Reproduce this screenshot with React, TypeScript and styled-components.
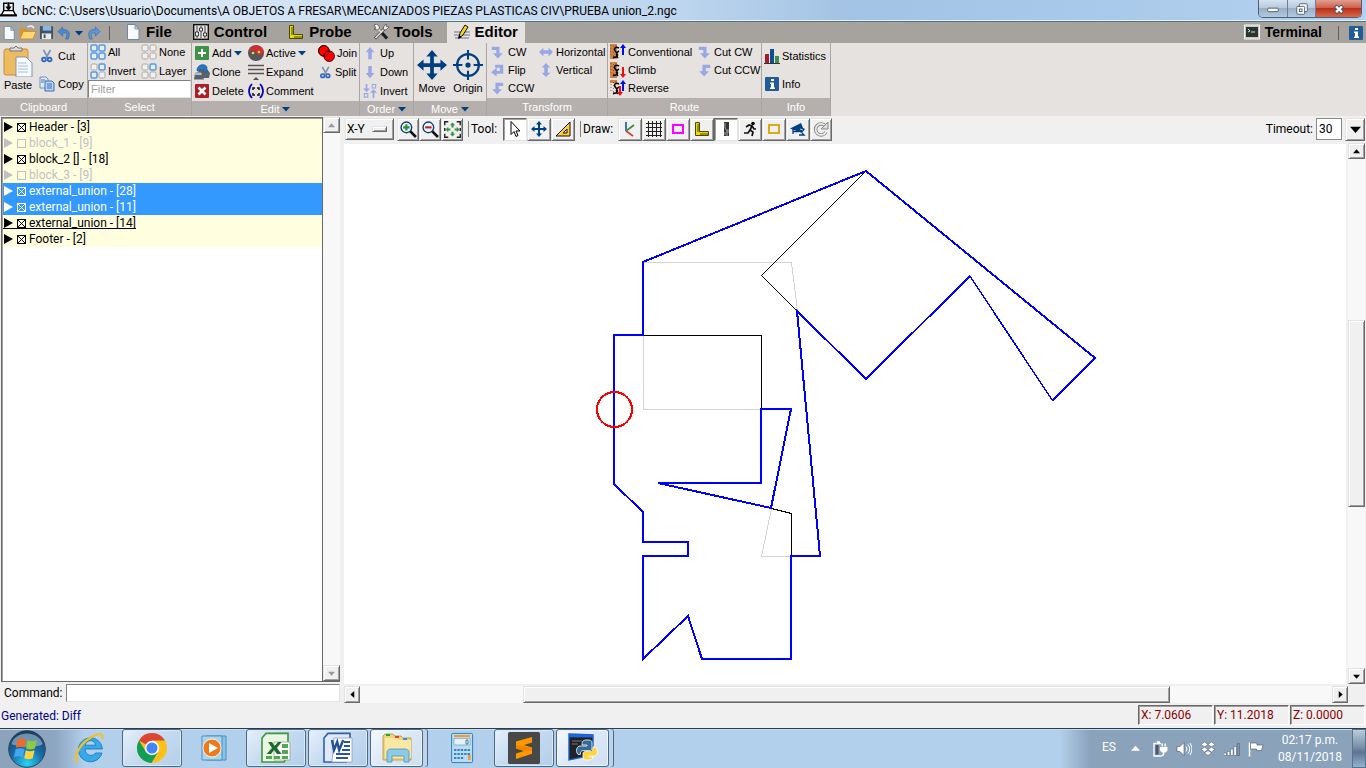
import { ReactNode, useState } from 'react';
import styled, { createGlobalStyle, css } from 'styled-components';

const theme = {
  ui: "Roboto, 'Open Sans', 'Noto Sans', sans-serif",
  ribbon: "'Liberation Sans', Arial, sans-serif",
  face: '#f0f0f0',
  ribbonBg: '#e6e2df',
  tabBg: '#a6a29e',
  labelBg: '#b5b0ad',
  navy: '#004080',
  pale: '#99a7e4',
};

const GlobalStyle = createGlobalStyle`
  * { box-sizing: border-box; }
  body { margin: 0; overflow: hidden; }
  button, input { font: inherit; color: inherit; margin: 0; }
  button { padding: 0; border: 0; background: none; cursor: default; }
  svg { display: block; flex: none; }
`;

const raised = css`
  background: ${theme.face};
  border: 1px solid;
  border-color: #e3e3e3 #696969 #696969 #e3e3e3;
  box-shadow: inset 1px 1px #fff, inset -1px -1px #a0a0a0;
`;

const sunken = css`
  background: #fff;
  border: 1px solid;
  border-color: #808080 #e3e3e3 #e3e3e3 #808080;
`;

const Window = styled.div`
  display: flex;
  flex-direction: column;
  height: 100vh;
  background: ${theme.face};
  font-family: ${theme.ui};
  font-size: 12px;
  line-height: 16px;
  color: #000;
`;

/* ---------- title bar ---------- */

const TitleBar = styled.header`
  display: flex;
  align-items: flex-start;
  height: 22px;
  padding-right: 4px;
  background: linear-gradient(90deg, #e2edf8 0, #cfe1f4 25%, #bdd5ee 50%, #a3c3e4 62%, #a9c9ea 80%, #b4d2f0 100%);
  border-bottom: 1px solid #56717f;
  box-shadow: inset 0 -1px #e4f2fb;
`;

const Title = styled.h1`
  flex: 1;
  margin: 0;
  padding: 3px 0 0 5px;
  font-size: 12px;
  font-weight: 400;
  line-height: 16px;
  white-space: nowrap;
`;

const CaptionButtons = styled.div`
  display: flex;
  border: 1px solid #4b5f75;
  border-top: 0;
  border-radius: 0 0 5px 5px;
  overflow: hidden;
`;

const CaptionButton = styled.button<{ $close?: boolean }>`
  display: flex;
  align-items: center;
  justify-content: center;
  width: ${(p) => (p.$close ? '46px' : '28px')};
  height: 17px;
  border-left: ${(p) => (p.$close ? '1px solid #4b2020' : '0')};
  background: ${(p) => (p.$close
    ? 'linear-gradient(#e0a090 0, #d0604a 45%, #b8301c 50%, #d8684a 100%)'
    : 'linear-gradient(#d5e2f0 0, #b9cade 45%, #9aafc6 50%, #b4c9e0 100%)')};
  & + & { border-left: 1px solid #6c8096; }
`;

/* ---------- tab row ---------- */

const TabRow = styled.nav`
  display: flex;
  align-items: stretch;
  height: 21px;
  padding: 0 2px;
  background: ${theme.tabBg};
  font-family: ${theme.ribbon};
`;

const QuickBar = styled.div`
  display: flex;
  align-items: center;
  gap: 3px;
  width: 116px;
`;

const Tabs = styled.div`
  display: flex;
  flex: 1;
  gap: 7px;
`;

const Tab = styled.button<{ $active?: boolean; $small?: boolean }>`
  display: flex;
  align-items: center;
  gap: 5px;
  padding: 0 7px 1px;
  font-size: ${(p) => (p.$small ? '14px' : '15px')};
  font-weight: 700;
  background: ${(p) => (p.$active ? theme.ribbonBg : 'transparent')};
`;

const Divider = styled.span<{ $space?: number }>`
  width: 1px;
  height: 14px;
  margin: 0 ${(p) => p.$space || 5}px;
  background: #5f5c5a;
  align-self: center;
`;

/* ---------- ribbon ---------- */

const Ribbon = styled.section`
  display: flex;
  height: 73px;
  background: ${theme.ribbonBg};
  font-family: ${theme.ribbon};
  font-size: 11px;
  line-height: 14px;
`;

const Group = styled.div<{ $width: number }>`
  display: flex;
  flex-direction: column;
  flex: 0 0 ${(p) => p.$width}px;
  border-right: 1px solid #a9a5a2;
`;

const GroupBody = styled.div`
  display: flex;
  flex: 1;
  min-height: 0;
`;

const GroupLabel = styled.div<{ $menu?: boolean }>`
  display: flex;
  align-items: center;
  justify-content: center;
  gap: 3px;
  height: ${(p) => (p.$menu ? '15px' : '18px')};
  background: ${theme.labelBg};
  color: #fff;
`;

const Column = styled.div<{ $width: number; $packed?: boolean }>`
  display: flex;
  flex-direction: column;
  justify-content: ${(p) => (p.$packed ? 'flex-start' : 'space-evenly')};
  width: ${(p) => p.$width}px;
`;

const Tool = styled.button<{ $slot?: number }>`
  display: flex;
  align-items: center;
  gap: 2px;
  height: 18px;
  padding-left: 2px;
  white-space: nowrap;
  & > svg:first-child { margin: 0 ${(p) => (p.$slot || 0)}px; }
`;

const BigTool = styled.button`
  display: flex;
  flex-direction: column;
  align-items: center;
  justify-content: flex-end;
  gap: 1px;
  width: 36px;
  padding-bottom: 6px;
`;

const ClipBody = styled(GroupBody)`
  & ${Column} { justify-content: space-between; padding: 4px 0 5px; }
`;

const SelectBody = styled(GroupBody)`
  flex-direction: column;
`;

const SelectGrid = styled.div`
  display: grid;
  grid-template-columns: 51px 51px;
  height: 37px;
`;

const FilterInput = styled.input`
  ${sunken}
  width: 100%;
  height: 18px;
  padding: 0 2px;
  &::placeholder { color: #a0a0a0; opacity: 1; }
`;

/* ---------- workspace ---------- */

const Workspace = styled.main`
  display: flex;
  flex: 1;
  min-height: 0;
  gap: 4px;
`;

const Sidebar = styled.aside`
  display: flex;
  flex-direction: column;
  flex: 0 0 340px;
  padding: 1px 0 0 1px;
`;

const TreeFrame = styled.div`
  display: flex;
  flex: 1;
  min-height: 0;
  border-bottom: 1px solid #696969;
`;

const Tree = styled.ul`
  flex: 1;
  margin: 0;
  padding: 1px 0 0 1px;
  list-style: none;
  background: #fff;
  border: 1px solid #696969;
  border-bottom: 0;
  box-shadow: inset 1px 1px #a0a0a0;
`;

const TreeRow = styled.li<{ $selected: boolean; $enabled: boolean }>`
  height: 16px;
  background: ${(p) => (p.$selected ? '#3399ff' : '#ffffe0')};
  color: ${(p) => (p.$selected ? '#fff' : p.$enabled ? '#000' : '#c0c0c0')};
`;

const TreeEntry = styled.div<{ $active: boolean }>`
  display: inline-flex;
  align-items: center;
  height: 16px;
  vertical-align: top;
  box-shadow: ${(p) => (p.$active ? 'inset 0 -2px #ffffe0, inset 0 -3px #000' : 'none')};
`;

const EntryLabel = styled.label`
  display: flex;
  align-items: center;
  gap: 3px;
  padding-left: 3px;
  white-space: nowrap;
`;

const BlockCheck = styled.input`
  appearance: none;
  width: 9px;
  height: 9px;
  border: 1px solid currentColor;
  &:checked {
    background:
      linear-gradient(45deg, transparent 43%, currentColor 43%, currentColor 57%, transparent 57%),
      linear-gradient(-45deg, transparent 43%, currentColor 43%, currentColor 57%, transparent 57%);
  }
`;

const ScrollTrack = styled.div<{ $vertical?: boolean }>`
  display: flex;
  flex-direction: ${(p) => (p.$vertical ? 'column' : 'row')};
  ${(p) => (p.$vertical ? 'width: 17px;' : 'flex: 1; height: 17px;')}
  background: #f8f8f8;
`;

const ScrollButton = styled.button`
  ${raised}
  display: flex;
  align-items: center;
  justify-content: center;
  flex: 0 0 16px;
`;

const ScrollSpace = styled.span<{ $grow: number }>`
  flex: ${(p) => p.$grow} 0 0;
`;

const ScrollThumb = styled.span<{ $grow: number }>`
  ${raised}
  flex: ${(p) => p.$grow} 0 0;
`;

const CommandRow = styled.div`
  display: flex;
  align-items: center;
  gap: 3px;
  height: 22px;
  padding: 0 0 0 3px;
`;

const CommandInput = styled.input`
  ${sunken}
  flex: 1;
  min-width: 0;
  height: 18px;
`;

const Editor = styled.section`
  display: flex;
  flex: 1;
  flex-direction: column;
  min-width: 0;
`;

const Toolbar = styled.div`
  display: flex;
  align-items: center;
  height: 27px;
  padding: 0 1px 1px;
`;

const ToolSet = styled.div`
  display: flex;
  align-items: center;
  margin-left: 3px;
  & + & { margin-left: 5px; }
`;

const ToolSetName = styled.span<{ $width: number }>`
  width: ${(p) => p.$width}px;
  height: 16px;
  padding-left: 2px;
  border-left: 1px solid #808080;
  line-height: 16px;
`;

const ViewButton = styled.button`
  ${raised}
  display: flex;
  align-items: center;
  justify-content: space-between;
  width: 49px;
  height: 22px;
  padding: 0 6px 0 1px;
`;

const ViewHandle = styled.span`
  ${raised}
  width: 15px;
  height: 6px;
`;

const IconButton = styled.button<{ $pressed?: boolean; $narrow?: boolean }>`
  ${raised}
  display: flex;
  align-items: center;
  justify-content: center;
  width: ${(p) => (p.$narrow ? '22px' : '24px')};
  height: 23px;
  ${(p) => p.$pressed && css`
    background: #fff;
    border-color: #696969 #e3e3e3 #e3e3e3 #696969;
    box-shadow: inset 1px 1px #a0a0a0;
  `}
`;

const Timeout = styled.div`
  display: flex;
  align-items: center;
  gap: 3px;
  margin-left: auto;
  & > input {
    width: 26px;
    height: 22px;
    padding: 0 2px;
    background: #fff;
    border: 1px solid #8a8a8a;
  }
`;

const DropButton = styled.button`
  ${raised}
  display: flex;
  align-items: center;
  justify-content: center;
  width: 20px;
  height: 23px;
`;

const CanvasRow = styled.div`
  display: flex;
  flex: 1;
  min-height: 0;
  gap: 2px;
  padding-right: 1px;
`;

const Canvas = styled.div`
  flex: 1;
  min-width: 0;
  margin-top: 1px;
  background: #fff;
  & > svg { width: 100%; height: 100%; }
`;

const HScrollRow = styled.div`
  display: flex;
  height: 20px;
  padding: 2px 18px 0 0;
`;

const StatusBar = styled.footer`
  display: flex;
  align-items: center;
  height: 24px;
  padding: 0 1px;
  gap: 1px;
  color: #8b0000;
`;

const StatusText = styled.span`
  flex: 1;
  color: #00008b;
`;

const Position = styled.output`
  width: 75px;
  height: 20px;
  padding: 0 2px;
  margin-bottom: 3px;
  border: 1px solid;
  border-color: #696969 #fff #fff #696969;
  box-shadow: inset 1px 1px #a0a0a0;
  line-height: 18px;
`;

/* ---------- taskbar ---------- */

const Taskbar = styled.div`
  display: flex;
  flex: 0 0 40px;
  border-top: 1px solid #2c3c4e;
  background: linear-gradient(90deg, #8da2bb 0, #8da5c0 55px, #b2cfeb 85px, #b2cfeb calc(100% - 306px), #8ba2bb calc(100% - 276px));
  box-shadow: inset 0 1px #c8dcef;
`;

const StartButton = styled.button`
  width: 60px;
  padding-left: 8px;
`;

const TaskButton = styled.button<{ $open?: boolean; $stack?: boolean }>`
  display: flex;
  align-items: center;
  justify-content: center;
  width: ${(p) => (p.$stack ? '53px' : '60px')};
  height: 38px;
  margin-right: ${(p) => (p.$stack ? '9px' : '2px')};
  border-radius: 3px;
  ${(p) => p.$open && css`
    border: 1px solid #4d6784;
    background: linear-gradient(135deg, #e6f0fa 0, #c6dbf0 45%, #b4cfea 100%);
    box-shadow: inset 0 0 0 1px #dcebf8;
  `}
  ${(p) => p.$stack && css`
    background: linear-gradient(135deg, #f4f9fd 0, #dbe8f6 50%, #cfe0f2 100%);
    box-shadow: inset 0 0 0 1px #eef6fc, 4px 0 #bdd5ec, 5px 0 #4d6784;
  `}
`;

const Tray = styled.div`
  display: flex;
  align-items: center;
  margin-left: auto;
  color: #fff;
`;

const Language = styled.span`
  width: 29px;
  margin-bottom: 4px;
`;

const TrayIcons = styled.div`
  display: flex;
  align-items: center;
  gap: 8px;
  & > svg:first-child { margin-right: 4px; }
`;

const Clock = styled.time`
  width: 88px;
  padding-left: 4px;
  text-align: center;
  line-height: 17px;
`;

const ShowDesktop = styled.button`
  align-self: stretch;
  width: 14px;
  border: 1px solid #5c728b;
  background: linear-gradient(#b9cbdd 0, #7c91aa 45%, #5d7390 60%, #93b3d0 100%);
`;

/* ---------- drawings ---------- */

const Arrow = ({ dir = 'down', size = 7, color = '#000' }: { dir?: string; size?: number; color?: string }) => {
  const turn: Record<string, number> = { down: 0, left: 90, up: 180, right: 270 };
  return (
    <svg width={size} height={size} viewBox="0 0 8 8">
      <path d="M0 2H8L4 6.5Z" fill={color} transform={`rotate(${turn[dir]} 4 4)`} />
    </svg>
  );
};

const turnCw = <path d="M1 1H10.500V9H14.500L8.500 15.500L2.500 9H6.500V5H1Z" fill={theme.pale} />;
const turnCcw = <path d="M15 1H5.500V9H1.500L7.500 15.500L13.500 9H9.500V5H15Z" fill={theme.pale} />;
const ruler = (
  <>
    <path d="M1.500 1.500h4v9h9v4h-13Z" fill="#e8dc10" stroke="#4d4800" />
    <path d="M3 4h2M3 6h2M3 8h2M3 10h2M7 12v2M9 12v2M11 12v2M13 12v2" stroke="#4d4800" />
  </>
);
const scissors = (
  <>
    <path d="M4 1l5 9M12 1L7 10" stroke="#7d93b0" strokeWidth="2" />
    <circle cx="4.500" cy="12" r="2.200" fill="none" stroke="#2864c0" strokeWidth="2" />
    <circle cx="11" cy="12" r="2.200" fill="none" stroke="#2864c0" strokeWidth="2" />
  </>
);
const page = (
  <>
    <path d="M2.500 .500h7.500l4 4.500v10.500H2.500Z" fill="#f7fbff" stroke="#6f88a8" />
    <path d="M10 .500V5h4Z" fill="#b7cde4" stroke="#6f88a8" strokeWidth=".8" />
  </>
);
const infoMark = (
  <>
    <rect x="1" y="1" width="14" height="14" rx="1" fill="#215c98" />
    <path d="M7 3h3v2H7ZM6 6.500h4v5h1v1.500H6v-1.500h1V8H6Z" fill="#fff" />
  </>
);
const moveCross = (
  <path d="M8 0l3 3.500H9V7h3.500V5L16 8l-3.500 3V9H9v3.500h2L8 16l-3-3.500h2V9H3.500v2L0 8l3.500-3v2H7V3.500H5Z" fill={theme.navy} />
);
const squares = (on: number[]) => (
  <>
    {[[1, 1], [9, 1], [1, 9], [9, 9]].map(([x, y], i) => (
      <rect
        key={i}
        x={x}
        y={y}
        width="6"
        height="6"
        rx="1.500"
        fill={on.includes(i) ? '#e3effc' : '#f2f0ef'}
        stroke={on.includes(i) ? '#5798e0' : '#a9a6a4'}
        strokeWidth={on.includes(i) ? 1.5 : 1}
      />
    ))}
  </>
);
const route = (up: boolean, down: boolean) => (
  <>
    <path d={up && !down ? 'M0 0h7v15H0Z' : down && !up ? 'M0 0h7v16H0Z' : 'M0 0h7v3H0Z'} fill="#cf8446" />
    <path d="M1 1v12M3.500 2v13M6 1v12" stroke="#754018" strokeWidth=".7" strokeDasharray="1 2" />
    <path d="M9 4C5 2 3 5 6 8s1 6-3 5M9 7c-3 1-3 5-1 7" fill="none" stroke="#000" strokeWidth="1.500" />
    {up && <path d="M13 0l3 4h-2v7h-2V4h-2Z" fill="#0010e0" />}
    {down && <path d={up ? 'M10 16l3-4h-2V6H9v6H7Z' : 'M13 16l3-4h-2V5h-2v7h-2Z'} fill="#e81010" />}
  </>
);
const lens = (
  <>
    <path d="M9.500 9.500L15 15" stroke="#111" strokeWidth="2.500" />
    <circle cx="6" cy="6" r="5" fill="#e9f3fa" stroke="#123c66" strokeWidth="1.300" />
  </>
);

const art: Record<string, ReactNode> = {
  app: (
    <>
      <path d="M3.500 10V3H7M9 3h3.500v7M3.500 10L1 14.500h14L12.500 10Z" fill="#fff" stroke="#000" strokeWidth="1.300" />
      <path d="M0 14.500h16" stroke="#000" strokeWidth="2" />
      <path d="M5 6h6L8 10ZM7 2h2v5H7Z" />
    </>
  ),
  page,
  open: (
    <>
      <path d="M1 14V4h5l1 2h7v8Z" fill="#d6952c" />
      <path d="M1 14L4 7h12l-3 7Z" fill="#ffd773" stroke="#c98a23" strokeWidth=".7" />
      <path d="M8 3c3-2 5-1 6 1" fill="none" stroke="#eceff2" strokeWidth="1.500" />
    </>
  ),
  save: (
    <>
      <rect x="1" y="1" width="14" height="14" rx="1" fill="#46525f" />
      <path d="M4 1h9v5H4Z" fill="#86b8ea" />
      <path d="M3 9h10v6H3Z" fill="#e8ecef" />
      <path d="M5 10h2v4H5Z" fill="#46525f" />
    </>
  ),
  undo: <path d="M1 7l5-5v3c6-1 9 3 6 10h-3c3-5 1-8-3-6v3Z" fill="#4b88cf" stroke="#3268aa" strokeWidth=".6" />,
  redo: <path d="M15 7l-5-5v3C4 4 1 8 4 15h3C4 10 6 7 10 9v3Z" fill="#5c96d6" stroke="#3268aa" strokeWidth=".6" />,
  control: (
    <>
      <rect x=".7" y=".7" width="14.600" height="14.600" fill="#e6e6e6" stroke="#111" strokeWidth="1.400" />
      <path d="M4 2v12M8 2v12M12 2v12" stroke="#444" />
      <path d="M2.500 8h3v4h-3ZM6.500 4h3v3h-3ZM10.500 9h3v3h-3Z" fill="#f7f7f7" stroke="#111" strokeWidth=".8" />
    </>
  ),
  ruler,
  tools: (
    <>
      <path d="M2 14.500L13 3" stroke="#444" strokeWidth="3" />
      <path d="M2.500 14L13 3" stroke="#e8e8e8" strokeWidth="1.600" />
      <path d="M5 5l4 4" stroke="#ddd" strokeWidth="1.500" />
      <path d="M1 1l3-1 2.500 3L6 5l-2 1L1 5l2-1Z" fill="#f3f3f3" stroke="#333" strokeWidth=".6" />
      <path d="M9 9l5 5.500" stroke="#1c1c1c" strokeWidth="3.200" />
      <path d="M10.500 3l2.500-3 .500 2.500L16 3l-3 3-2.500-.500Z" fill="#eee" stroke="#333" strokeWidth=".6" />
    </>
  ),
  editor: (
    <>
      <path d="M0 8h16M0 11h16M1 14h14" stroke="#697493" />
      <path d="M5 14l1-5 5-8 3 2-5 8Z" fill="#f7d51c" stroke="#111" />
      <path d="M4 15l1-4 3 2Z" />
    </>
  ),
  terminal: (
    <>
      <rect x=".5" y="1" width="15" height="14" fill="#c7cac5" stroke="#f3f3f3" />
      <rect x="2" y="3" width="12" height="10" fill="#293630" />
      <path d="M4 5l2 2-2 1M7 8h4" stroke="#d6e3dc" fill="none" />
    </>
  ),
  info: infoMark,
  paste: (
    <>
      <rect x="1" y="2" width="12" height="13" rx="1" fill="#edbb60" stroke="#c38e38" strokeWidth=".5" />
      <path d="M4 3V1.500h2L7 .5l1 1h2V3Z" fill="#d8dadb" stroke="#76787a" strokeWidth=".5" />
      <path d="M7 6h5l3 3v7H7Z" fill="#f5faff" stroke="#7f95ae" strokeWidth=".5" />
      <path d="M8 9h4M8 10.500h5M8 12h5M8 13.500h5" stroke="#a9bdd2" strokeWidth=".5" />
    </>
  ),
  scissors,
  copy: (
    <>
      <path d="M1 1h6l2 2v9H1Z" fill="#dceafa" stroke="#597eac" strokeWidth=".8" />
      <path d="M6 5h7l2 2v8H6Z" fill="#b6d4f7" stroke="#2d63a8" strokeWidth=".9" />
      <path d="M8 8h5M8 10h5M8 12h5M2 4h4M2 6h3" stroke="#39679e" strokeWidth=".9" />
    </>
  ),
  all: squares([0, 1, 2, 3]),
  none: squares([]),
  invert: squares([1, 2]),
  layer: squares([1]),
  add: (
    <>
      <rect x="1" y="1" width="14" height="14" rx="1" fill="#3f9147" />
      <path d="M7 4h2v3h3v2H9v3H7V9H4V7h3Z" fill="#fff" />
    </>
  ),
  remove: (
    <>
      <rect x="1" y="1" width="14" height="14" rx="1" fill="#ad1f25" />
      <path d="M4.500 4.500l7 7M11.500 4.500l-7 7" stroke="#fff" strokeWidth="2.600" />
    </>
  ),
  clone: (
    <>
      <path d="M4 5h9l3 4-1 5H6Z" fill="#59636d" />
      <path d="M3 5C5-1 12 0 13 3v5h-3V5L6 4.500V7H3Z" fill="#2678c6" stroke="#174f86" strokeWidth=".5" />
      <path d="M1 9l6-2 3 8.500H0Z" fill="#59636d" />
      <path d="M1.500 8.500h5.500l1 2.500H1Z" fill="#b5c0c9" />
    </>
  ),
  active: (
    <>
      <circle cx="8" cy="8" r="8" fill="#575759" />
      <path d="M.2 7C2-1 14-2 15.800 7 13 12 10 9 8 7S2 5 .2 7Z" fill="#d82b30" />
      <circle cx="5" cy="8" r="1.300" fill="#e9dc35" />
      <circle cx="11" cy="7" r="1.300" fill="#e9dc35" />
    </>
  ),
  expand: (
    <>
      <path d="M0 1.500h16M0 5.500h16M0 9.500h16" stroke="#555" strokeWidth="1.600" />
      <path d="M5 16l3-3 3 3Z" fill="#555" />
    </>
  ),
  comment: (
    <>
      <path d="M4 1C0 5 0 11 4 15M12 1c4 4 4 10 0 14" fill="none" stroke="#0000c8" strokeWidth="1.700" />
      <path d="M5 7V5h2M9 5h2v2M11 10v2H9M7 12H5v-2" fill="none" stroke="#111" strokeWidth="1.500" />
    </>
  ),
  join: (
    <g fill="#f00" stroke="#300" strokeWidth=".8">
      <circle cx="5.500" cy="5.500" r="5" />
      <circle cx="10.500" cy="10.500" r="5" />
      <circle cx="5.500" cy="5.500" r="5" fill="none" />
    </g>
  ),
  up: <path d="M8 1l5 6h-3v8H6V7H3Z" fill={theme.pale} />,
  down: <path d="M8 15l5-6h-3V1H6v8H3Z" fill={theme.pale} />,
  swap: (
    <>
      <path d="M4 9L0 5h3V0h2v5h3ZM12 6l4 4h-3v6h-2v-6H8Z" fill={theme.pale} transform="translate(0 0)" />
      <path d="M10.500 .5h4v4h-4ZM1.500 11h4v4h-4Z" fill="none" stroke={theme.pale} strokeWidth="1.200" />
    </>
  ),
  move: moveCross,
  origin: (
    <>
      <circle cx="8" cy="8" r="5.800" fill="none" stroke={theme.navy} strokeWidth="1.200" />
      <path d="M8 0v5M8 11v5M0 8h5M11 8h5" stroke={theme.navy} strokeWidth="1.100" />
      <circle cx="8" cy="8" r="1.400" fill={theme.navy} />
    </>
  ),
  cw: turnCw,
  ccw: turnCcw,
  flip: <path d="M5 1h10v11H7v3.500L0 10l7-5.500V8.500h4V4.500H5Z" fill={theme.pale} />,
  horizontal: <path d="M0 8l5-5v3h6V3l5 5-5 5v-3H5v3Z" fill={theme.pale} />,
  vertical: <path d="M8 0l5 5h-3v6h3l-5 5-5-5h3V5H3Z" fill={theme.pale} />,
  conventional: route(true, false),
  climb: route(false, true),
  reverse: route(true, true),
  stats: (
    <>
      <path d="M1 6h4v9H1Z" fill="#a51e2c" />
      <path d="M6 1h4v14H6Z" fill="#114f91" />
      <path d="M11 8h4v7h-4Z" fill="#3c9146" />
      <path d="M0 15.500h16" stroke="#333" />
    </>
  ),
  zoomIn: <>{lens}<path d="M6 3v6M3 6h6" stroke="#2d8a36" strokeWidth="2" /></>,
  zoomOut: <>{lens}<path d="M3 6h6" stroke="#c61a26" strokeWidth="2" /></>,
  zoomFit: (
    <>
      <path d="M.700 4V.700H4M12 .700h3.300V4M15.300 12v3.300H12M4 15.300H.700V12" fill="none" stroke="#222" strokeWidth="1.300" />
      <path d="M8 1.500l2.500 2.500H9v2H7V4H5.500ZM8 14.500l2.500-2.500H9v-2H7v2H5.500ZM1.500 8L4 5.500V7h2v2H4v1.500ZM14.500 8L12 5.500V7h-2v2h2v1.500Z" fill="#3b9145" />
      <path d="M.700 6.500v3M15.300 6.500v3" stroke="#222" strokeWidth="1.300" />
    </>
  ),
  pointer: <path d="M4 .500v13l3-3 2 5 2-1-2-4.500h4Z" fill="#fff" stroke="#000" />,
  triangle: <path d="M1 15L15 1v14ZM8 12h4V8Z" fill="#ffcf33" fillRule="evenodd" stroke="#111" />,
  axes: (
    <g fill="none" strokeWidth="1.800">
      <path d="M4 1v9" stroke="#286ba8" />
      <path d="M4 10l8-6" stroke="#3c9146" />
      <path d="M4 10l7 5" stroke="#c94348" />
    </g>
  ),
  grid: <path d="M2.500 0v16M6.500 0v16M10.500 0v16M14.500 0v16M0 2.500h16M0 6.500h16M0 10.500h16M0 14.500h16" stroke="#222" shapeRendering="crispEdges" />,
  margin: <rect x="3" y="4" width="10" height="8" fill="none" stroke="#f0f" strokeWidth="2" />,
  workarea: <rect x="3" y="4" width="10" height="8" fill="none" stroke="#d6ad16" strokeWidth="2" />,
  endmill: (
    <>
      <path d="M6 1h5v14H6Z" fill="#333" />
      <path d="M7 2v5l2 3v5M10 8v4M7 11v3" fill="none" stroke="#aaa" />
    </>
  ),
  runner: (
    <>
      <circle cx="11" cy="2.500" r="1.800" />
      <path d="M4 6l3-2 3 1-2 4 3 2-1 4M8 9l-2 3H2M10 5l2 3h2" fill="none" stroke="#111" strokeWidth="1.700" />
    </>
  ),
  camera: (
    <>
      <path d="M0 7.500L11 2l2 5 2 1-3 4-4-1.500Z" fill={theme.navy} />
      <path d="M12 12l2 2H9M3 8v5M3 10.500h6" fill="none" stroke={theme.navy} strokeWidth="1.300" />
      <path d="M10 8l3 1" stroke={theme.face} strokeWidth=".8" />
    </>
  ),
  refresh: (
    <>
      <path d="M12.500 5A5.500 5.500 0 1 0 13 11" fill="none" stroke="#888" strokeWidth="3.500" />
      <path d="M12.500 5A5.500 5.500 0 1 0 13 11" fill="none" stroke="#eee" strokeWidth="1.600" />
      <path d="M15 1v7H8Z" fill="#ddd" stroke="#888" />
    </>
  ),
  minimize: <rect x="2" y="7" width="12" height="4" rx="1" fill="#fff" stroke="#46566a" />,
  restore: (
    <g fill="#fff" stroke="#46566a">
      <rect x="5" y="2" width="9" height="9" rx="1" />
      <rect x="2" y="5" width="9" height="9" rx="1" />
      <rect x="5" y="8" width="3" height="3" />
    </g>
  ),
  close: (
    <>
      <path d="M3 4l10 9M13 4L3 13" stroke="#46566a" strokeWidth="5" />
      <path d="M4 4.700l8 7.500M12 4.700L4 12.200" stroke="#fff" strokeWidth="3" />
    </>
  ),
  start: (
    <>
      <defs>
        <radialGradient id="orb" cx=".5" cy=".9" r=".9">
          <stop offset="0" stopColor="#25d6f7" />
          <stop offset=".5" stopColor="#176ca8" />
          <stop offset="1" stopColor="#1b3b5c" />
        </radialGradient>
      </defs>
      <circle cx="8" cy="8" r="7.700" fill="url(#orb)" stroke="#294157" strokeWidth=".4" />
      <path d="M1.400 6C3 0 13 0 14.600 6 11 8 5 7 1.400 6Z" fill="#a9c2d4" opacity=".6" />
      <path d="M4 4c1.500-.7 2.500-.5 3.700 0L7 7.500c-1.200-.6-2.200-.5-3.700 0Z" fill="#f06a2c" />
      <path d="M8.300 4.300c1.200.6 2.400.6 3.800 0l-.8 3.500c-1.300.6-2.400.5-3.700 0Z" fill="#8ccc3e" />
      <path d="M3.200 8.100c1.400-.6 2.500-.5 3.700 0l-.7 3.400c-1.200-.6-2.300-.6-3.700 0Z" fill="#45a6ee" />
      <path d="M7.500 8.500c1.200.6 2.300.5 3.700 0l-.8 3.400c-1.200.6-2.300.5-3.600 0Z" fill="#ffd23e" />
    </>
  ),
  explorerE: (
    <>
      <path d="M14 10.500A6 6 0 1 1 14.200 8.500H5.500c.3 4 4.500 3.700 5.200 2ZM5.600 6.600h5.200c-.3-3-4.700-3-5.200 0Z" fill="#37a9e8" stroke="#1673b4" strokeWidth=".4" fillRule="evenodd" />
      <path d="M2 15C-1 13 3 6 8 3c4-2.500 7-3 6 .5" fill="none" stroke="#f4c020" strokeWidth="1.100" />
    </>
  ),
  chrome: (
    <>
      <circle cx="8" cy="8" r="7.500" fill="#fbc116" />
      <path d="M8 8L1.500 4.200A7.500 7.500 0 0 1 14.500 4.300H8Z" fill="#db4437" />
      <path d="M1.500 4.200A7.500 7.500 0 0 0 7.700 15.500L11 10 8 11.500 5 10Z" fill="#0f9d58" />
      <circle cx="8" cy="8" r="3.600" fill="#fff" />
      <circle cx="8" cy="8" r="2.800" fill="#4285f4" />
    </>
  ),
  player: (
    <>
      <path d="M4 2h10v12H4Z" fill="#89c3e4" stroke="#4c91be" strokeWidth=".5" />
      <path d="M2 2h10v12H2Z" fill="#a9d5ee" stroke="#4c91be" strokeWidth=".5" />
      <circle cx="7" cy="8" r="4.500" fill="#f17a18" stroke="#fff" strokeWidth=".4" />
      <path d="M5.500 5.500v5L10 8Z" fill="#fff" />
    </>
  ),
  excel: (
    <>
      <path d="M3 .700h11v11L12 15H1V3Z" fill="#eaf5e4" stroke="#3c963c" strokeWidth=".8" />
      <path d="M7 5h8v9H7Z" fill="#fff" stroke="#8ab37e" strokeWidth=".4" />
      <path d="M11 6h3v2h-3ZM11 9h3v2h-3ZM11 12h3v1.500h-3ZM7 12h3v1.500H7ZM3 12h3v1.500H3Z" fill="#58a553" />
      <path d="M4 5h2l1.300 2L9 5h1.800L8.500 8l2.300 3H8.500L7 9l-1.500 2H3.300L6 8Z" fill="#1d6b2c" />
    </>
  ),
  word: (
    <>
      <path d="M3 .700h11v11L12 15H1V3Z" fill="#dfe9f7" stroke="#345fa6" strokeWidth=".8" />
      <path d="M6 3h9v12H5Z" fill="#fff" stroke="#8aa0c8" strokeWidth=".4" />
      <path d="M11 5h3M11 7h3M10 9h4M7 11h7M7 13h6" stroke="#2a569e" strokeWidth=".9" />
      <path d="M5 4l1 5 1.600-4 1 4 2-5" fill="none" stroke="#244f9a" strokeWidth="1.200" />
    </>
  ),
  folder: (
    <>
      <path d="M1 2l1-1h4l1 1h3l1 1h4v11H1Z" fill="#eed477" stroke="#b2933d" strokeWidth=".4" />
      <path d="M2 3h6l1 1h6v9H2Z" fill="#f8e8a3" />
      <path d="M2.500 1h2v1h-2Z" fill="#20a63a" />
      <path d="M7 2h2v1H7Z" fill="#d4452c" />
      <path d="M11 3h2v1h-2Z" fill="#3a8fe0" />
      <path d="M3 15v-5c0-1 1-1.500 2-1.500h7c1 0 2 .5 2 1.500v5h-2.500v-3h-6v3Z" fill="#8ccbe8" stroke="#5193b8" strokeWidth=".4" />
    </>
  ),
  calc: (
    <>
      <rect x="2.800" y=".700" width="10.500" height="14.600" rx=".6" fill="#b8dcf3" stroke="#2f80b8" strokeWidth=".5" />
      <path d="M4 1.500h8v1H4Z" fill="#f29a2c" />
      <path d="M4 3.200h8v3.300H4Z" fill="#e6f0f5" stroke="#5c92b5" strokeWidth=".3" />
      <path d="M10 4h1v2h-1Z" fill="none" stroke="#356080" strokeWidth=".4" />
      <path d="M4 9h8M4 11h8M4 13h5" stroke="#3884b6" strokeWidth="1.100" strokeDasharray="1.200 .5" />
      <path d="M11 11.500h1.300V14H11Z" fill="#f29a2c" />
    </>
  ),
  sublime: (
    <>
      <rect width="16" height="16" rx=".8" fill="#484848" />
      <path d="M4 4.700l8-2.200v2.700L8 6.500l4 1.200v3.200L4 13.500v-2.700l4-1.300L4 8.200Z" fill="#ff9800" />
      <path d="M4 8.200V6.500l8 1.200v1.500L8 9.500Z" fill="#ef8700" />
    </>
  ),
  python: (
    <>
      <path d="M1 1l12 .5v10L1 14Z" fill="#202226" stroke="#1b5bc4" strokeWidth=".7" />
      <path d="M1 1l12 .5v1.300L1 2.600Z" fill="#1d66dd" />
      <path d="M2.500 4.500h5M2.500 6h3" stroke="#777" strokeWidth=".6" />
      <path d="M10 4c2.500 0 2.500.5 2.500 2v2c0 1-.5 1.300-1.500 1.300H8c-1 0-1.300.7-1.300 1.900H5.500C4 9.500 5 7 6.500 7H10v-.5H7.500C7.500 4.500 8 4 10 4Z" fill="#316b9c" stroke="#fff" strokeWidth=".4" />
      <path d="M10.500 14c-2.500 0-2.500-.5-2.500-2v-1c0-1 .5-1.300 1.500-1.300h2.200c1 0 1.300-.7 1.300-2.200h1.200c1.500 1.200 1.300 4.500-.5 4.500h-3v.5H13c0 1-1 1.500-2.500 1.500Z" fill="#ffd43b" stroke="#fff" strokeWidth=".4" />
    </>
  ),
  power: (
    <>
      <path d="M5 1h3M9 15H2V2.500h7" fill="none" stroke="#fff" strokeWidth="1.300" />
      <path d="M3.500 4h3v9.500h-3Z" fill="#485668" />
      <path d="M9.500 2.500h1.500v3H9.500ZM12.500 2.500H14v3h-1.500ZM8 6h7.500v3.500l-2 2h-1.200V13c0 1.500-1 2.500-3 2.500V14c1 0 1.500-.3 1.500-1.300v-1.200H10l-2-2Z" fill="#fff" />
    </>
  ),
  volume: (
    <>
      <path d="M1 5.500h3l4-4v13l-4-4H1Z" fill="#fff" stroke="#46566a" strokeWidth=".6" />
      <path d="M10 5.500q2 2.500 0 5M12 3.500q3.500 4.500 0 9M14 2q4 6 0 12" fill="none" stroke="#fff" />
    </>
  ),
  dropbox: <path d="M4.500 1L8 3.500 4.500 6 1 3.500ZM11.500 1L15 3.500 11.500 6 8 3.500ZM4.500 6L8 8.500 4.500 11 1 8.500ZM11.500 6L15 8.500 11.500 11 8 8.500ZM8 9.500l3.500 2.500L8 14.500 4.500 12Z" fill="#fff" stroke="#46566a" strokeWidth=".5" />,
  signal: (
    <g fill="#fff" stroke="#46566a" strokeWidth=".5">
      <path d="M0 12h2.500v2.500H0ZM3.300 10.500h2.500v4H3.300ZM6.600 8h2.500v6.500H6.600ZM9.900 5.500h2.500v9H9.900Z" />
      <path d="M13.200 2.500h2.500v12h-2.500Z" fill="#8394a8" />
    </g>
  ),
  flag: (
    <>
      <path d="M1.500 1.500v14" stroke="#fff" strokeWidth="1.500" />
      <path d="M2.500 2h6.500v2h6l-1.500 5.500H8.500V8H2.500Z" fill="#fff" stroke="#46566a" strokeWidth=".6" />
    </>
  ),
};

const Icon = ({ name, size = 16 }: { name: string; size?: number }) => (
  <svg width={size} height={size} viewBox="0 0 16 16" aria-hidden="true">{art[name]}</svg>
);

const Expander = () => (
  <svg width="11" height="10" viewBox="0 0 11 10"><path d="M1 0L10 5L1 10Z" fill="currentColor" /></svg>
);

const Drawing = () => (
  <svg viewBox="344 144 1002 540" fill="none" shapeRendering="crispEdges">
    <g transform="translate(.5 .5)">
      <path stroke="#d3d3d3" d="M643 262H791L797 311M643 335V409H761M771 508L761 556H791" />
      <path stroke="#000" d="M643 335H761V409M865 171L761 275L797 311M771 508L791 513V556" />
    </g>
    <g stroke="#0000ff" strokeWidth="2">
      <path d="M866 171L643 262V335H614V484L643 512V542H688V556H643V659L688 616L702 659H791V556H820L797 311L866 379L970 276" />
      <path d="M1052 401L1095 358L866 171" />
      <path strokeWidth="1.500" d="M969.500 275.500L1052.500 400.500" />
      <path d="M761 409H791L771 508L658 483H761Z" />
    </g>
    <circle cx="614.5" cy="409.5" r="17.5" stroke="#f00" strokeWidth="2" />
  </svg>
);

/* ---------- data ---------- */

const tabs = [
  { name: 'File', icon: 'page' },
  { name: 'Control', icon: 'control' },
  { name: 'Probe', icon: 'ruler' },
  { name: 'Tools', icon: 'tools' },
  { name: 'Editor', icon: 'editor' },
];

const initialBlocks = [
  { label: 'Header - [3]', enabled: true },
  { label: 'block_1 - [9]', enabled: false },
  { label: 'block_2 [] - [18]', enabled: true },
  { label: 'block_3 - [9]', enabled: false },
  { label: 'external_union - [28]', enabled: true, selected: true },
  { label: 'external_union - [11]', enabled: true, selected: true },
  { label: 'external_union - [14]', enabled: true, active: true },
  { label: 'Footer - [2]', enabled: true },
];

const drawTools = ['axes', 'grid', 'margin', 'ruler', 'endmill', 'runner', 'workarea', 'camera', 'refresh'];

const tasks = [
  { icon: 'explorerE', name: 'Internet Explorer' },
  { icon: 'chrome', name: 'Chrome', open: true },
  { icon: 'player', name: 'Media Player' },
  { icon: 'excel', name: 'Excel', open: true },
  { icon: 'word', name: 'Word', open: true },
  { icon: 'folder', name: 'Explorer', open: true, stack: true },
  { icon: 'calc', name: 'Calculator' },
  { icon: 'sublime', name: 'Sublime Text', open: true },
  { icon: 'python', name: 'Python', open: true, stack: true },
];

type ToolProps = { icon: string; label: string; size?: number; slot?: number; menu?: boolean };

const RibbonTool = ({ icon, label, size = 16, slot, menu }: ToolProps) => (
  <Tool $slot={slot}>
    <Icon name={icon} size={size} />
    {label}
    {menu && <Arrow color={theme.navy} size={8} />}
  </Tool>
);

const RibbonGroup = ({ label, width, menu, children }: { label: string; width: number; menu?: boolean; children: ReactNode }) => (
  <Group $width={width}>
    {children}
    <GroupLabel $menu={menu}>
      {label}
      {menu && <Arrow color={theme.navy} size={8} />}
    </GroupLabel>
  </Group>
);

export default function App() {
  const [active, setActive] = useState('Editor');
  const [blocks, setBlocks] = useState(initialBlocks);
  const [tool, setTool] = useState('pointer');

  const toggleBlock = (index: number) => {
    setBlocks(blocks.map((block, i) => (i === index ? { ...block, enabled: !block.enabled } : block)));
  };

  return (
    <Window>
      <GlobalStyle />
      <TitleBar>
        <Icon name="app" size={17} />
        <Title>bCNC: C:\Users\Usuario\Documents\A OBJETOS A FRESAR\MECANIZADOS PIEZAS PLASTICAS CIV\PRUEBA union_2.ngc</Title>
        <CaptionButtons>
          <CaptionButton aria-label="Minimize"><Icon name="minimize" size={14} /></CaptionButton>
          <CaptionButton aria-label="Restore"><Icon name="restore" size={14} /></CaptionButton>
          <CaptionButton $close aria-label="Close"><Icon name="close" size={12} /></CaptionButton>
        </CaptionButtons>
      </TitleBar>

      <TabRow>
        <QuickBar>
          <button aria-label="New"><Icon name="page" size={14} /></button>
          <button aria-label="Open"><Icon name="open" size={17} /></button>
          <button aria-label="Save"><Icon name="save" size={15} /></button>
          <button aria-label="Undo"><Icon name="undo" size={15} /></button>
          <button aria-label="Undo list"><Arrow color={theme.navy} size={8} /></button>
          <button aria-label="Redo"><Icon name="redo" size={15} /></button>
          <Divider />
        </QuickBar>
        <Tabs>
          {tabs.map((tab) => (
            <Tab key={tab.name} $active={tab.name === active} onClick={() => setActive(tab.name)}>
              <Icon name={tab.icon} />
              {tab.name}
            </Tab>
          ))}
        </Tabs>
        <Tab $small><Icon name="terminal" />Terminal</Tab>
        <Divider $space={9} />
        <button aria-label="About"><Icon name="info" /></button>
      </TabRow>

      <Ribbon>
        <RibbonGroup label="Clipboard" width={88}>
          <ClipBody>
            <BigTool><Icon name="paste" size={32} />Paste</BigTool>
            <Column $width={50}>
              <RibbonTool icon="scissors" label="Cut" size={14} slot={2} />
              <RibbonTool icon="copy" label="Copy" size={16} slot={1} />
            </Column>
          </ClipBody>
        </RibbonGroup>
        <RibbonGroup label="Select" width={104}>
          <SelectBody>
            <SelectGrid>
              <RibbonTool icon="all" label="All" />
              <RibbonTool icon="none" label="None" />
              <RibbonTool icon="invert" label="Invert" />
              <RibbonTool icon="layer" label="Layer" />
            </SelectGrid>
            <FilterInput placeholder="Filter" aria-label="Filter" />
          </SelectBody>
        </RibbonGroup>
        <RibbonGroup label="Edit" width={168} menu>
          <GroupBody>
            <Column $width={54}>
              <RibbonTool icon="add" label="Add" menu />
              <RibbonTool icon="clone" label="Clone" />
              <RibbonTool icon="remove" label="Delete" />
            </Column>
            <Column $width={70}>
              <RibbonTool icon="active" label="Active" menu />
              <RibbonTool icon="expand" label="Expand" />
              <RibbonTool icon="comment" label="Comment" />
            </Column>
            <Column $width={43}>
              <RibbonTool icon="join" label="Join" size={17} />
              <RibbonTool icon="scissors" label="Split" size={13} slot={1} />
              <Tool as="span" />
            </Column>
          </GroupBody>
        </RibbonGroup>
        <RibbonGroup label="Order" width={54} menu>
          <GroupBody>
            <Column $width={53}>
              <RibbonTool icon="up" label="Up" size={14} slot={1} />
              <RibbonTool icon="down" label="Down" size={14} slot={1} />
              <RibbonTool icon="swap" label="Invert" size={14} slot={1} />
            </Column>
          </GroupBody>
        </RibbonGroup>
        <RibbonGroup label="Move" width={73} menu>
          <GroupBody>
            <BigTool><Icon name="move" size={30} />Move</BigTool>
            <BigTool><Icon name="origin" size={30} />Origin</BigTool>
          </GroupBody>
        </RibbonGroup>
        <RibbonGroup label="Transform" width={121}>
          <GroupBody>
            <Column $width={49} $packed>
              <RibbonTool icon="cw" label="CW" size={13} slot={2} />
              <RibbonTool icon="flip" label="Flip" size={13} slot={2} />
              <RibbonTool icon="ccw" label="CCW" size={13} slot={2} />
            </Column>
            <Column $width={71} $packed>
              <RibbonTool icon="horizontal" label="Horizontal" size={14} slot={1} />
              <RibbonTool icon="vertical" label="Vertical" size={14} slot={1} />
            </Column>
          </GroupBody>
        </RibbonGroup>
        <RibbonGroup label="Route" width={154}>
          <GroupBody>
            <Column $width={87} $packed>
              <RibbonTool icon="conventional" label="Conventional" />
              <RibbonTool icon="climb" label="Climb" />
              <RibbonTool icon="reverse" label="Reverse" />
            </Column>
            <Column $width={66} $packed>
              <RibbonTool icon="cw" label="Cut CW" size={13} slot={1} />
              <RibbonTool icon="ccw" label="Cut CCW" size={13} slot={1} />
            </Column>
          </GroupBody>
        </RibbonGroup>
        <RibbonGroup label="Info" width={69}>
          <ClipBody>
            <Column $width={68}>
              <RibbonTool icon="stats" label="Statistics" />
              <RibbonTool icon="info" label="Info" />
            </Column>
          </ClipBody>
        </RibbonGroup>
      </Ribbon>

      <Workspace>
        <Sidebar>
          <TreeFrame>
            <Tree>
              {blocks.map((block, i) => (
                <TreeRow key={block.label} $selected={!!block.selected} $enabled={block.enabled}>
                  <TreeEntry $active={!!block.active}>
                    <button aria-label={`Expand ${block.label}`}><Expander /></button>
                    <EntryLabel>
                      <BlockCheck type="checkbox" checked={block.enabled} onChange={() => toggleBlock(i)} />
                      {block.label}
                    </EntryLabel>
                  </TreeEntry>
                </TreeRow>
              ))}
            </Tree>
            <ScrollTrack $vertical>
              <ScrollButton aria-label="Scroll list up"><Arrow dir="up" color="#999" /></ScrollButton>
              <ScrollSpace $grow={1} />
              <ScrollButton aria-label="Scroll list down"><Arrow color="#999" /></ScrollButton>
            </ScrollTrack>
          </TreeFrame>
          <CommandRow>
            <label htmlFor="command">Command:</label>
            <CommandInput id="command" />
          </CommandRow>
        </Sidebar>

        <Editor>
          <Toolbar>
            <ViewButton>X-Y<ViewHandle /></ViewButton>
            <ToolSet>
              {['zoomIn', 'zoomOut', 'zoomFit'].map((name) => (
                <IconButton key={name} $narrow aria-label={name}><Icon name={name} size={17} /></IconButton>
              ))}
            </ToolSet>
            <ToolSet>
              <ToolSetName $width={35}>Tool:</ToolSetName>
              {['pointer', 'move', 'triangle'].map((name) => (
                <IconButton key={name} $pressed={tool === name} onClick={() => setTool(name)} aria-label={name}>
                  <Icon name={name} />
                </IconButton>
              ))}
            </ToolSet>
            <ToolSet>
              <ToolSetName $width={38}>Draw:</ToolSetName>
              {drawTools.map((name) => (
                <IconButton key={name} $pressed={name === 'endmill'} $narrow={name === 'refresh'} aria-label={name}>
                  <Icon name={name} />
                </IconButton>
              ))}
            </ToolSet>
            <Timeout>
              <label htmlFor="timeout">Timeout:</label>
              <input id="timeout" defaultValue="30" />
              <DropButton aria-label="Timeout values"><Arrow size={11} /></DropButton>
            </Timeout>
          </Toolbar>
          <CanvasRow>
            <Canvas><Drawing /></Canvas>
            <ScrollTrack $vertical>
              <ScrollButton aria-label="Scroll up"><Arrow dir="up" /></ScrollButton>
              <ScrollSpace $grow={162} />
              <ScrollThumb $grow={187} />
              <ScrollSpace $grow={162} />
              <ScrollButton aria-label="Scroll down"><Arrow /></ScrollButton>
            </ScrollTrack>
          </CanvasRow>
          <HScrollRow>
            <ScrollTrack>
              <ScrollButton aria-label="Scroll left"><Arrow dir="left" /></ScrollButton>
              <ScrollSpace $grow={163} />
              <ScrollThumb $grow={647} />
              <ScrollSpace $grow={163} />
              <ScrollButton aria-label="Scroll right"><Arrow dir="right" /></ScrollButton>
            </ScrollTrack>
          </HScrollRow>
        </Editor>
      </Workspace>

      <StatusBar>
        <StatusText>Generated: Diff</StatusText>
        <Position>X: 7.0606</Position>
        <Position>Y: 11.2018</Position>
        <Position>Z: 0.0000</Position>
      </StatusBar>

      <Taskbar>
        <StartButton aria-label="Start"><Icon name="start" size={38} /></StartButton>
        {tasks.map((task) => (
          <TaskButton key={task.name} $open={task.open} $stack={task.stack} aria-label={task.name}>
            <Icon name={task.icon} size={32} />
          </TaskButton>
        ))}
        <Tray>
          <Language>ES</Language>
          <TrayIcons>
            <Arrow dir="up" size={9} color="#fff" />
            <Icon name="power" />
            <Icon name="volume" />
            <Icon name="dropbox" />
            <Icon name="signal" />
            <Icon name="flag" />
          </TrayIcons>
          <Clock>02:17 p.m.<br />08/11/2018</Clock>
          <ShowDesktop aria-label="Show desktop" />
        </Tray>
      </Taskbar>
    </Window>
  );
}
